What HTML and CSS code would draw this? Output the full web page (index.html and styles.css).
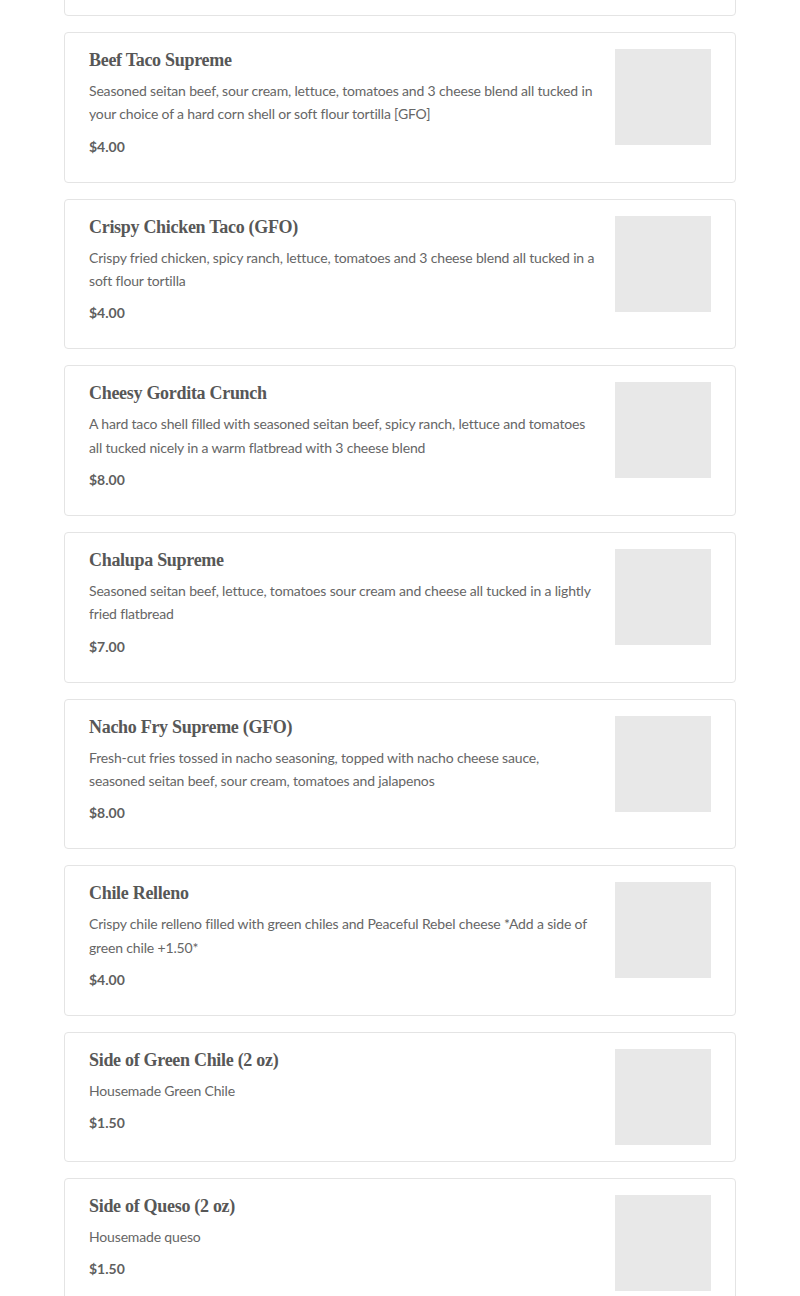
FILE: index.html
```html
<!DOCTYPE html>
<html lang="en">
<head>
<meta charset="utf-8">
<title>Menu</title>
<link rel="stylesheet" href="styles.css">
</head>
<body>
<main class="menu">
  <article class="item">
    <div class="item-text">
      <h3 class="item-name">Bean &amp; Cheese Burrito</h3>
      <p class="item-desc">Refried beans and 3 cheese blend wrapped in a warm soft flour tortilla with a side of housemade salsa</p>
      <p class="item-price">$6.00</p>
    </div>
    <div class="item-photo"></div>
  </article>

  <article class="item">
    <div class="item-text">
      <h3 class="item-name">Beef Taco Supreme</h3>
      <p class="item-desc">Seasoned seitan beef, sour cream, lettuce, tomatoes and 3 cheese blend all tucked in your choice of a hard corn shell or soft flour tortilla [GFO]</p>
      <p class="item-price">$4.00</p>
    </div>
    <div class="item-photo"></div>
  </article>

  <article class="item">
    <div class="item-text">
      <h3 class="item-name">Crispy Chicken Taco (GFO)</h3>
      <p class="item-desc">Crispy fried chicken, spicy ranch, lettuce, tomatoes and 3 cheese blend all tucked in a soft flour tortilla</p>
      <p class="item-price">$4.00</p>
    </div>
    <div class="item-photo"></div>
  </article>

  <article class="item">
    <div class="item-text">
      <h3 class="item-name">Cheesy Gordita Crunch</h3>
      <p class="item-desc">A hard taco shell filled with seasoned seitan beef, spicy ranch, lettuce and tomatoes all tucked nicely in a warm flatbread with 3 cheese blend</p>
      <p class="item-price">$8.00</p>
    </div>
    <div class="item-photo"></div>
  </article>

  <article class="item">
    <div class="item-text">
      <h3 class="item-name">Chalupa Supreme</h3>
      <p class="item-desc">Seasoned seitan beef, lettuce, tomatoes sour cream and cheese all tucked in a lightly fried flatbread</p>
      <p class="item-price">$7.00</p>
    </div>
    <div class="item-photo"></div>
  </article>

  <article class="item">
    <div class="item-text">
      <h3 class="item-name">Nacho Fry Supreme (GFO)</h3>
      <p class="item-desc">Fresh-cut fries tossed in nacho seasoning, topped with nacho cheese sauce, seasoned seitan beef, sour cream, tomatoes and jalapenos</p>
      <p class="item-price">$8.00</p>
    </div>
    <div class="item-photo"></div>
  </article>

  <article class="item">
    <div class="item-text">
      <h3 class="item-name">Chile Relleno</h3>
      <p class="item-desc">Crispy chile relleno filled with green chiles and Peaceful Rebel cheese *Add a side of green chile +1.50*</p>
      <p class="item-price">$4.00</p>
    </div>
    <div class="item-photo"></div>
  </article>

  <article class="item">
    <div class="item-text">
      <h3 class="item-name">Side of Green Chile (2 oz)</h3>
      <p class="item-desc">Housemade Green Chile</p>
      <p class="item-price">$1.50</p>
    </div>
    <div class="item-photo"></div>
  </article>

  <article class="item">
    <div class="item-text">
      <h3 class="item-name">Side of Queso (2 oz)</h3>
      <p class="item-desc">Housemade queso</p>
      <p class="item-price">$1.50</p>
    </div>
    <div class="item-photo"></div>
  </article>
</main>
</body>
</html>
```

FILE: styles.css
```css
html, body {
  margin: 0;
  padding: 0;
  background: #ffffff;
}

body {
  font-family: "Lato", "Open Sans", sans-serif;
  color: #666666;
}

.menu {
  max-width: 672px;
  margin: -134.67px auto 0;
  display: flex;
  flex-direction: column;
  gap: 16px;
}

.item {
  display: flex;
  align-items: flex-start;
  gap: 19px;
  padding: 16px 24px;
  border: 1px solid #e4e4e4;
  border-radius: 4px;
  background: #ffffff;
}

.item-text {
  flex: 1;
  min-width: 0;
}

.item-name {
  margin: 0 0 8px;
  font-family: "Liberation Serif", "DejaVu Serif", serif;
  font-weight: 700;
  font-size: 18px;
  line-height: 22px;
  letter-spacing: -0.3px;
  color: #575757;
}

.item-desc {
  margin: 0;
  font-size: 14px;
  line-height: 23.33px;
  letter-spacing: -0.16px;
  color: #666666;
}

.item-price {
  margin: 9px 0 7px;
  font-size: 14px;
  line-height: 24px;
  font-weight: 700;
  color: #5f5f5f;
}

.item-photo {
  flex: none;
  width: 96px;
  height: 96px;
  background: #e8e8e8;
}
```
